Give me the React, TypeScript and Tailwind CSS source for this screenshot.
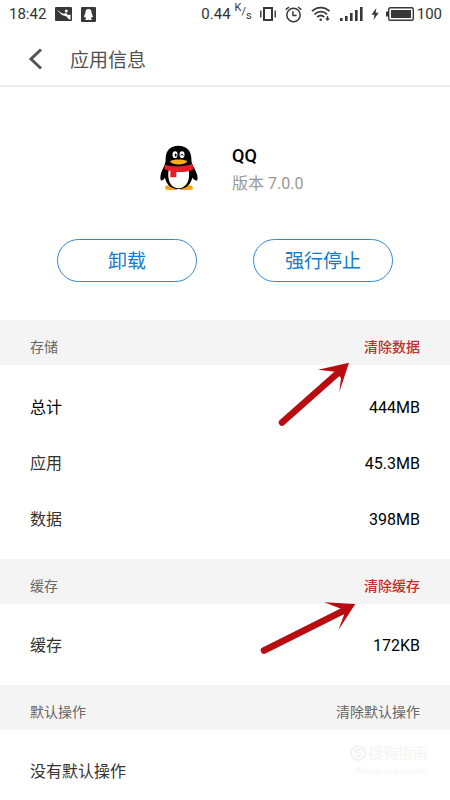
import type { ReactNode } from "react";

function StatusBar() {
  return (
    <div className="flex h-7 items-center justify-between pr-2 pl-[9px] text-[15px] text-[#333]">
      <div className="flex items-center gap-[9px]">
        <span>18:42</span>
        <svg className="h-[14px] w-[17px]" viewBox="0 0 17 14">
          <rect width="17" height="14" rx="1" fill="#383838" />
          <path d="M1.5 2.5 L6.5 6 L8.5 6.8 L11 6 L13 8 L15.5 7.5 V12.500 H14 L11.5 9.5 L7 8 Z" fill="#fff" />
          <circle cx="11.3" cy="4" r="1.5" fill="#fff" />
        </svg>
        <svg className="h-[15px] w-[15px]" viewBox="0 0 15 15">
          <rect width="15" height="15" rx="1" fill="#383838" />
          <path d="M7.5 2 C5.2 2 4.4 3.7 4.4 5.5 C4.4 7 3 8.6 3 10.3 L4.3 10 L5 11.5 L4 13 H7 L7.5 12.4 L8 13 H11 L10 11.5 L10.7 10 L12 10.3 C12 8.6 10.6 7 10.6 5.5 C10.6 3.7 9.8 2 7.5 2 Z" fill="#fff" />
        </svg>
      </div>
      <div className="flex items-center">
        <span>0.44</span>
        <span className="ml-1 flex text-[11px] leading-4">
          <span className="-mt-1">K</span>
          <span>/</span>
          <span className="mt-1">s</span>
        </span>
        <svg className="ml-2 h-4 w-4" viewBox="0 0 16 16" fill="none" stroke="#383838">
          <rect x="4" y="2" width="8" height="12" strokeWidth="2" />
          <path d="M.8 4.5 V11.5 M15.2 4.5 V11.5" strokeWidth="1.4" />
        </svg>
        <svg className="ml-[9px] h-[17px] w-[17px]" viewBox="0 0 17 17" fill="none" stroke="#383838" strokeWidth="1.5">
          <circle cx="8.5" cy="9" r="6.7" />
          <path d="M8 5.3 V9.5 H11.5 M.7 3.7 L4 1 M13 1 L16.3 3.7" />
        </svg>
        <svg className="ml-[9px] h-4 w-5" viewBox="0 0 20 16" fill="none" stroke="#383838" strokeWidth="1.8">
          <path d="M1 5.2 C6 .4 13.5 .4 18.5 5.2 M3.5 8.3 C7.3 4.7 12.3 4.7 16 8.3 M6.2 11.2 C8.5 9.1 11.2 9.1 13.3 11.2" />
          <circle cx="9.7" cy="13.7" r="1.3" fill="#383838" stroke="none" />
          <path d="M16.5 10 V13" strokeWidth="1.4" />
          <path d="M14 12.2 H19 L16.5 15 Z" fill="#383838" stroke="none" />
        </svg>
        <svg className="ml-2 h-[15px] w-6" viewBox="0 0 24 15" fill="#383838">
          <rect x="1" y="11" width="2.6" height="3" />
          <rect x="6" y="9" width="2.6" height="5" />
          <rect x="11" y="6" width="2.6" height="8" />
          <rect x="16" y="3" width="2.6" height="11" />
          <rect x="21" y="0" width="2.6" height="14" />
        </svg>
        <svg className="ml-2 h-3 w-2" viewBox="0 0 8 12" fill="#383838">
          <path d="M5.3 0 L.5 6.8 H3.5 L2.5 12 L7.7 4.8 H4.7 Z" />
        </svg>
        <svg className="ml-[7px] h-[14px] w-7" viewBox="0 0 28 14">
          <rect x="2.7" y=".7" width="24.6" height="12.6" rx="1.5" fill="none" stroke="#383838" strokeWidth="1.4" />
          <rect x="5" y="3" width="20" height="8" fill="#383838" />
          <rect x="0" y="4.5" width="2.5" height="5" fill="#383838" />
        </svg>
        <span className="ml-[3px]">100</span>
      </div>
    </div>
  );
}

function Penguin() {
  return (
    <svg className="h-[46px] w-[38px]" viewBox="60 45 114 138">
      <path d="M82 166 C72 170 72 180 84 180 H110 L116 176 L124 180 H148 C162 180 162 170 151 166 Z" fill="#f9a51b" />
      <path d="M115 47 C91 47 77 62 77 85 C77 96 75 103 71 111 C64 124 59 139 62 149 C64 155 71 149 75 143 C79 165 95 177 115 177 C137 177 152 165 157 143 C162 149 170 155 172 149 C175 139 168 124 161 111 C156 103 154 96 154 85 C154 62 139 47 115 47 Z" fill="#000" />
      <path d="M86 119 C80 152 94 175 116 175 C138 175 152 152 146 118 Z" fill="#fff" />
      <ellipse cx="105" cy="74" rx="7.5" ry="10" fill="#fff" />
      <ellipse cx="126" cy="74" rx="7.5" ry="10" fill="#fff" />
      <ellipse cx="107" cy="75" rx="3" ry="4.5" />
      <path d="M122.5 77 C123 71 129 71 129.5 77" fill="none" stroke="#000" strokeWidth="3" />
      <path d="M90 94 C97 87 135 87 142 94 C135 107 97 107 90 94 Z" fill="#faab18" />
      <path d="M75 104 C99 111 132 111 157 102 L161 117 C149 125 128 127 109 126 V142 H91 V123 C84 122 78 120 73 117 Z" fill="#ea1c27" />
    </svg>
  );
}

function Section({ title, action, children }: { title: string; action: ReactNode; children: ReactNode }) {
  return (
    <section className="relative">
      <div className="flex h-[45px] items-center justify-between bg-[#f4f4f4] px-[30px] pt-2 text-sm text-[#666]">
        <h2>{title}</h2>
        {action}
      </div>
      {children}
    </section>
  );
}

function Row({ label, value, strong }: { label: string; value?: string; strong?: boolean }) {
  return (
    <div className="flex h-14 items-center justify-between text-base text-black">
      <dt className={strong ? "text-black" : "text-[#333]"}>{label}</dt>
      {value && <dd>{value}</dd>}
    </div>
  );
}

export default function App() {
  return (
    <main lang="zh-CN" className="min-h-screen overflow-hidden bg-white font-['Roboto','Noto_Sans_CJK_SC',sans-serif]">
      <StatusBar />
      <header className="flex h-[59px] items-center border-b-2 border-[#eee] pt-1 pl-7 text-[#505050]">
        <button type="button" aria-label="返回" className="w-[42px]">
          <svg className="h-[22px] w-4" viewBox="0 0 16 22" fill="none" stroke="#555" strokeWidth="3">
            <path d="M13 1.5 L3 11 L13 20.5" />
          </svg>
        </button>
        <h1 className="pt-1.5 text-[19px]">应用信息</h1>
      </header>

      <div className="flex items-center justify-center gap-[34px] pt-[51px] pl-[18px]">
        <Penguin />
        <div className="w-[76px] pt-1">
          <h2 className="text-lg leading-7 font-medium text-black">QQ</h2>
          <p className="text-base leading-7 whitespace-nowrap text-[#999]">版本 7.0.0</p>
        </div>
      </div>

      <div className="flex justify-center gap-14 pt-[41px] pb-[38px] text-[19px] text-[#0f7bd2]">
        <button type="button" className="h-[43px] w-[140px] rounded-full border border-[#3388cc] pt-1">卸载</button>
        <button type="button" className="h-[43px] w-[140px] rounded-full border border-[#3388cc] pt-1">强行停止</button>
      </div>

      <Section title="存储" action={<button type="button" className="font-medium text-[#bf3028]">清除数据</button>}>
        <dl className="px-[30px] pt-[15px] pb-[11px]">
          <Row label="总计" value="444MB" strong />
          <Row label="应用" value="45.3MB" />
          <Row label="数据" value="398MB" />
        </dl>
        <svg className="absolute top-10 right-[98px] h-[68px] w-[76px]" viewBox="276 360 76 68" fill="#b90c10">
          <path d="M282 422.5 L339 372" stroke="#b90c10" strokeWidth="6.5" strokeLinecap="round" />
          <path d="M349 362.7 L318 369.7 L335 371.7 L341 378 L339.3 392 Z" />
        </svg>
      </Section>

      <Section title="缓存" action={<button type="button" className="font-medium text-[#bf3028]">清除缓存</button>}>
        <dl className="px-[30px] pt-[14px] pb-[11px]">
          <Row label="缓存" value="172KB" />
        </dl>
        <svg className="absolute top-10 right-[90px] h-[58px] w-[102px]" viewBox="258 599 102 58" fill="#b90c10">
          <path d="M264 650.5 L343 611" stroke="#b90c10" strokeWidth="6.5" strokeLinecap="round" />
          <path d="M355.3 604 L324 602.3 L341 608.7 L344 615 L338.3 630.3 Z" />
        </svg>
      </Section>

      <Section title="默认操作" action={<button type="button">清除默认操作</button>}>
        <dl className="px-[30px] pt-[14px]">
          <Row label="没有默认操作" />
        </dl>
        <div className="absolute top-[58px] right-[22px] text-right text-[#f4f4f4]">
          <p className="flex items-center justify-end gap-0.5 text-[15px] leading-5">
            <svg className="h-4 w-4" viewBox="0 0 16 16" fill="none" stroke="#f2f2f2" strokeWidth="2">
              <circle cx="8" cy="8" r="7" />
              <path d="M11 5 C8 3.5 5 4.5 5.5 6.5 C6 8.5 10.5 7.5 10.5 9.7 C10.5 12 7 12 5 10.8" />
            </svg>
            搜狗指南
          </p>
          <p className="text-[9px] leading-4">zhinan.sogou.com</p>
        </div>
      </Section>
    </main>
  );
}
